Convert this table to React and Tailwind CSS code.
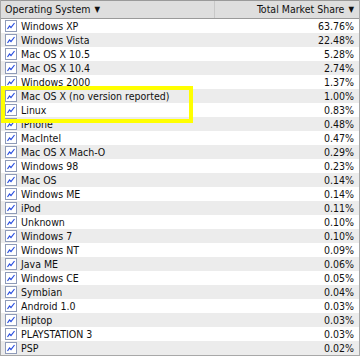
import React from "react";

const rows = [
  ["Windows XP", "63.76%"],
  ["Windows Vista", "22.48%"],
  ["Mac OS X 10.5", "5.28%"],
  ["Mac OS X 10.4", "2.74%"],
  ["Windows 2000", "1.37%"],
  ["Mac OS X (no version reported)", "1.00%"],
  ["Linux", "0.83%"],
  ["iPhone", "0.48%"],
  ["MacIntel", "0.47%"],
  ["Mac OS X Mach-O", "0.29%"],
  ["Windows 98", "0.23%"],
  ["Mac OS", "0.14%"],
  ["Windows ME", "0.14%"],
  ["iPod", "0.11%"],
  ["Unknown", "0.10%"],
  ["Windows 7", "0.10%"],
  ["Windows NT", "0.09%"],
  ["Java ME", "0.06%"],
  ["Windows CE", "0.05%"],
  ["Symbian", "0.04%"],
  ["Android 1.0", "0.03%"],
  ["Hiptop", "0.03%"],
  ["PLAYSTATION 3", "0.03%"],
  ["PSP", "0.02%"],
];

function ChartIcon() {
  return (
    <svg width="12" height="12" viewBox="0 0 12 12" className="shrink-0">
      <rect x="0.5" y="0.5" width="11" height="11" fill="#fff" stroke="#8f9bb8" />
      <polyline points="2.5,9 4.5,6 6,7.5 9.5,3" fill="none" stroke="#2a4fe0" strokeWidth="1.2" />
    </svg>
  );
}

function Caret() {
  return <span className="ml-[4px] inline-block text-[8px] leading-none">▼</span>;
}

export default function App() {
  return (
    <div className="relative w-[360px] h-[361px] bg-white overflow-hidden font-['DejaVu_Sans_Condensed','DejaVu_Sans',sans-serif] text-[10.5px] text-[#111]">
      <div className="border-x border-b border-[#a8a8a8]">
        {/* header */}
        <div className="flex h-[19px] bg-[#dedede] border-y border-[#9a9a9a]">
          <div className="w-[214px] pl-[4px] flex items-center border-r border-[#c8c8c8]">
            Operating System<Caret />
          </div>
          <div className="flex-1 pr-[5px] flex items-center justify-end">
            Total Market Share<Caret />
          </div>
        </div>

        {rows.map(([name, share], i) => (
          <div
            key={name}
            className={`flex items-center h-[14px] ${i % 2 === 1 ? "bg-[#ececec]" : "bg-white"}`}
          >
            <div className="flex items-center gap-[4px] pl-[4px] w-[214px]">
              <ChartIcon />
              <span className="leading-none">{name}</span>
            </div>
            <div className="flex-1 text-right pr-[5px] leading-none">{share}</div>
          </div>
        ))}
      </div>

      <div className="text-center text-[10px] text-[#555] mt-[2px]">23.1.0% 55</div>

      {/* highlight annotation */}
      <div className="absolute left-[1px] top-[86px] w-[192px] h-[37px] border-[4px] border-[#ffff00]" />
    </div>
  );
}
